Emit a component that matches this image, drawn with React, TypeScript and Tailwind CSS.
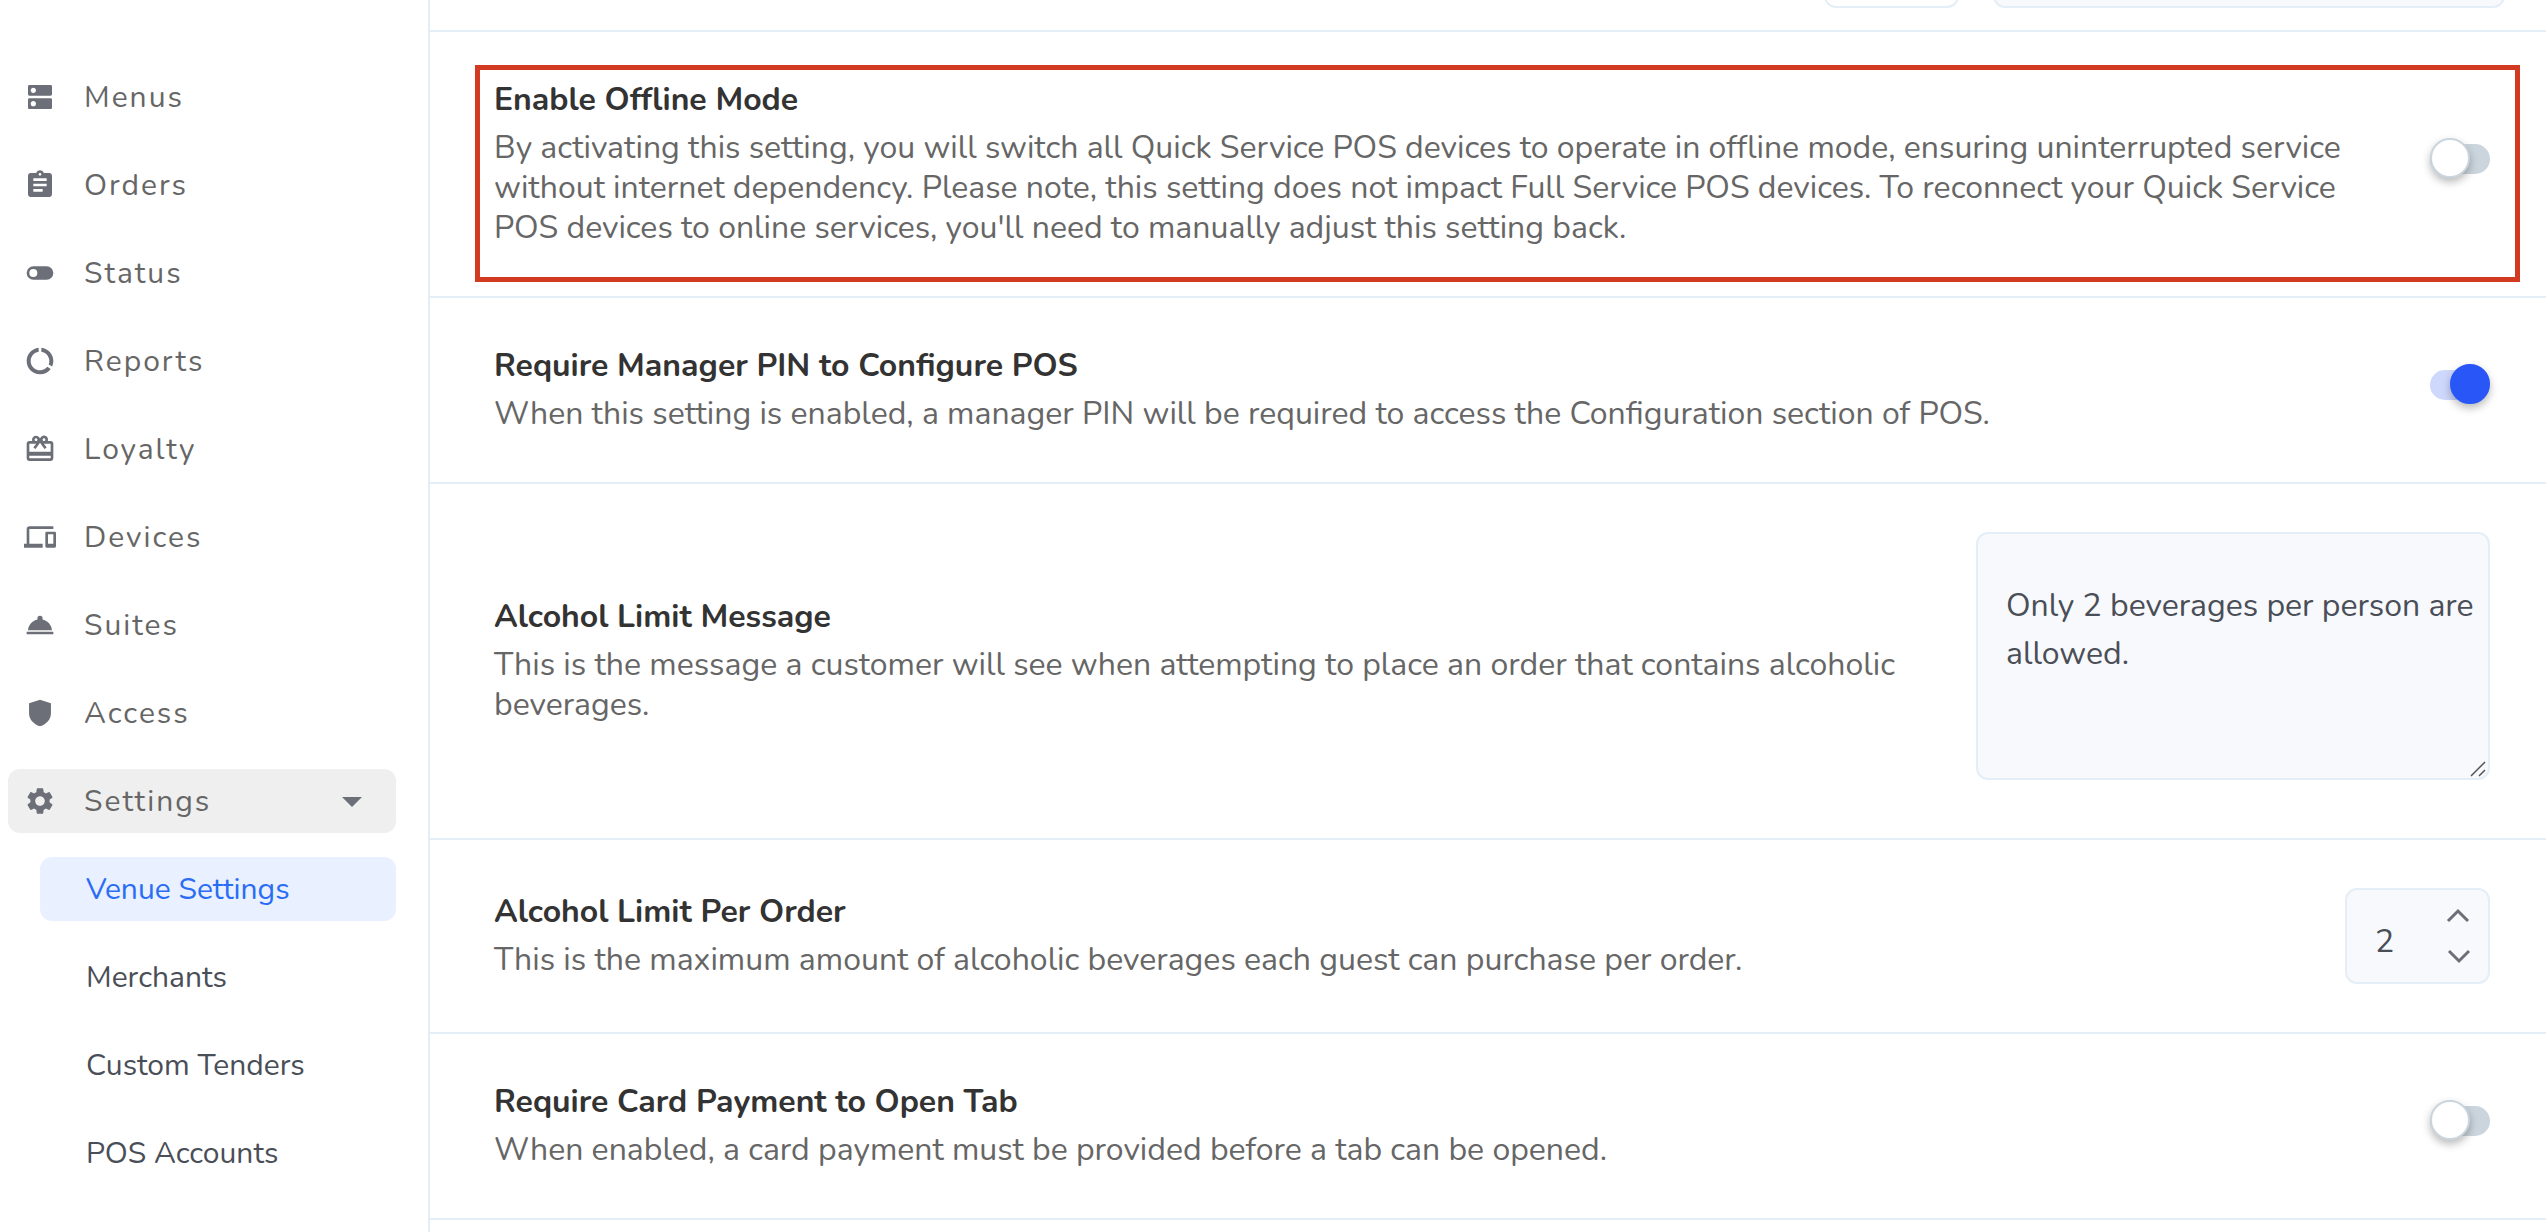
import { useId, useState } from "react";
import type { ReactNode } from "react";
import type { IconType } from "react-icons";
import {
  MdArrowDropDown,
  MdAssignment,
  MdDataUsage,
  MdDevices,
  MdDns,
  MdRedeem,
  MdRoomService,
  MdSettings,
} from "react-icons/md";

type IconProps = { className?: string };

function StatusIcon({ className }: IconProps) {
  return (
    <svg viewBox="0 0 24 24" fill="currentColor" fillRule="evenodd" className={className}>
      <path d="M7 7h10a5 5 0 0 1 0 10H7A5 5 0 0 1 7 7zm0 2a3 3 0 1 0 0 6 3 3 0 0 0 0-6z" />
    </svg>
  );
}

function ShieldIcon({ className }: IconProps) {
  return (
    <svg viewBox="0 0 24 24" fill="currentColor" className={className}>
      <path d="M12 2 3.8 4.6v7.6c0 4.4 3.2 8.2 8.2 9.8 5-1.6 8.2-5.4 8.2-9.8V4.6z" />
    </svg>
  );
}

const links: { name: string; icon: IconType | typeof StatusIcon }[] = [
  { name: "Menus", icon: MdDns },
  { name: "Orders", icon: MdAssignment },
  { name: "Status", icon: StatusIcon },
  { name: "Reports", icon: MdDataUsage },
  { name: "Loyalty", icon: MdRedeem },
  { name: "Devices", icon: MdDevices },
  { name: "Suites", icon: MdRoomService },
  { name: "Access", icon: ShieldIcon },
];

const subLinks = ["Venue Settings", "Merchants", "Custom Tenders", "POS Accounts"];

function Sidebar() {
  return (
    <nav className="w-[430px] shrink-0 border-r-2 border-[#e4eef6] pt-[65px] pr-8 pl-2 text-[30px] text-[#666]">
      <ul className="flex flex-col gap-6">
        {links.map(({ name, icon: Icon }) => (
          <li key={name}>
            <a href="#" className="flex h-16 items-center gap-7 rounded-xl px-4 tracking-[2px]">
              <Icon className="size-8 text-[#6c6f78]" />
              <span>{name}</span>
            </a>
          </li>
        ))}
        <li>
          <button
            type="button"
            className="flex h-16 w-full items-center gap-7 rounded-xl bg-[#efefef] px-4 text-left tracking-[2px]"
          >
            <MdSettings className="size-8 text-[#6c6f78]" />
            <span className="grow">Settings</span>
            <MdArrowDropDown className="mr-1 size-12 text-[#6c6f78]" />
          </button>
        </li>
        {subLinks.map((name, index) => (
          <li key={name} className="pl-8">
            <a
              href="#"
              className={
                index === 0
                  ? "flex h-16 items-center rounded-xl bg-[#e9f0ff] px-[46px] text-[#2a6df4]"
                  : "flex h-16 items-center rounded-xl px-[46px] text-[#4a4e57]"
              }
            >
              {name}
            </a>
          </li>
        ))}
      </ul>
    </nav>
  );
}

function Switch({ id, defaultChecked = false }: { id: string; defaultChecked?: boolean }) {
  return (
    <span className="flex w-[60px] shrink-0 pb-3">
      <span className="relative flex h-10 w-full items-center pt-[2px]">
        <input
          id={id}
          type="checkbox"
          role="switch"
          defaultChecked={defaultChecked}
          className="peer h-[30px] w-full appearance-none rounded-full bg-[#cbd5dd] checked:bg-[#cdd8fc]"
        />
        <span className="pointer-events-none absolute top-0 left-0 size-10 rounded-full border-2 border-[#cbd5dd] bg-white shadow-[0_4px_8px_rgba(0,0,0,0.28)] peer-checked:right-0 peer-checked:left-auto peer-checked:border-[#2957f7] peer-checked:bg-[#2957f7]" />
      </span>
    </span>
  );
}

function NumberBox({ id }: { id: string }) {
  const [value, setValue] = useState(2);

  return (
    <div className="flex h-24 w-[145px] shrink-0 items-center rounded-xl border-2 border-[#e4eef6] bg-[#f8f9fc] pr-4 pl-7">
      <input
        id={id}
        type="number"
        value={value}
        onChange={(e) => setValue(Number(e.target.value))}
        className="w-full min-w-0 appearance-none bg-transparent pt-3 text-[32px] text-[#4a4e57] outline-none [&::-webkit-inner-spin-button]:appearance-none"
      />
      <div className="flex flex-col gap-3 text-[#6c6f78]">
        <button type="button" aria-label="Increase" onClick={() => setValue(value + 1)}>
          <svg viewBox="0 0 28 28" fill="none" stroke="currentColor" strokeWidth="3" className="size-7">
            <path d="m4 19 10-10 10 10" />
          </svg>
        </button>
        <button type="button" aria-label="Decrease" onClick={() => setValue(value - 1)}>
          <svg viewBox="0 0 28 28" fill="none" stroke="currentColor" strokeWidth="3" className="size-7">
            <path d="m5 9 10 10L25 9" />
          </svg>
        </button>
      </div>
    </div>
  );
}

function MessageBox({ id }: { id: string }) {
  return (
    <div className="relative w-[514px] shrink-0 pb-[10px]">
      <textarea
        id={id}
        defaultValue="Only 2 beverages per person are allowed."
        className="block h-[248px] w-full resize-none rounded-xl border-2 border-[#e4eef6] bg-[#f8f9fc] pt-12 pr-2 pl-7 text-[32px] leading-[48px] text-[#4a4e57] outline-none"
      />
      <svg
        viewBox="0 0 16 16"
        fill="none"
        stroke="#555"
        strokeWidth="1.5"
        className="pointer-events-none absolute right-1 bottom-[13px] size-4"
      >
        <path d="M1 15 15 1M9 15l6-6" />
      </svg>
    </div>
  );
}

type SettingProps = {
  title: string;
  description: string;
  highlighted?: boolean;
  control: (id: string) => ReactNode;
};

function Setting({ title, description, highlighted, control }: SettingProps) {
  const id = useId();

  return (
    <section className="relative flex items-center gap-12 border-b-2 border-[#e4eef6] py-12 pr-14 pl-16">
      {highlighted && (
        <div className="pointer-events-none absolute top-[33px] right-[26px] bottom-[14px] left-[45px] border-5 border-[#d23a22]" />
      )}
      <div className="flex grow flex-col gap-2 text-[32px] leading-10">
        <label htmlFor={id} className="font-bold text-[#333]">
          {title}
        </label>
        <p className="text-[#666]">{description}</p>
      </div>
      {control(id)}
    </section>
  );
}

export default function App() {
  return (
    <div className="flex h-screen overflow-hidden bg-white font-['Nunito','Lato',sans-serif]">
      <Sidebar />
      <main className="min-w-0 grow">
        <div className="flex h-8 items-end justify-end gap-[34px] overflow-hidden border-b-2 border-[#e4eef6] pr-[41px] pb-[22px]">
          <button
            type="button"
            aria-label="Edit"
            className="h-16 w-[135px] shrink-0 rounded-xl border-2 border-[#e4eef6] bg-white"
          />
          <input
            aria-label="Value"
            className="h-16 w-[512px] shrink-0 rounded-xl border-2 border-[#e4eef6] bg-[#f8f9fc]"
          />
        </div>
        <Setting
          title="Enable Offline Mode"
          description="By activating this setting, you will switch all Quick Service POS devices to operate in offline mode, ensuring uninterrupted service without internet dependency. Please note, this setting does not impact Full Service POS devices. To reconnect your Quick Service POS devices to online services, you'll need to manually adjust this setting back."
          highlighted
          control={(id) => <Switch id={id} />}
        />
        <Setting
          title="Require Manager PIN to Configure POS"
          description="When this setting is enabled, a manager PIN will be required to access the Configuration section of POS."
          control={(id) => <Switch id={id} defaultChecked />}
        />
        <Setting
          title="Alcohol Limit Message"
          description="This is the message a customer will see when attempting to place an order that contains alcoholic beverages."
          control={(id) => <MessageBox id={id} />}
        />
        <Setting
          title="Alcohol Limit Per Order"
          description="This is the maximum amount of alcoholic beverages each guest can purchase per order."
          control={(id) => <NumberBox id={id} />}
        />
        <Setting
          title="Require Card Payment to Open Tab"
          description="When enabled, a card payment must be provided before a tab can be opened."
          control={(id) => <Switch id={id} />}
        />
      </main>
    </div>
  );
}
